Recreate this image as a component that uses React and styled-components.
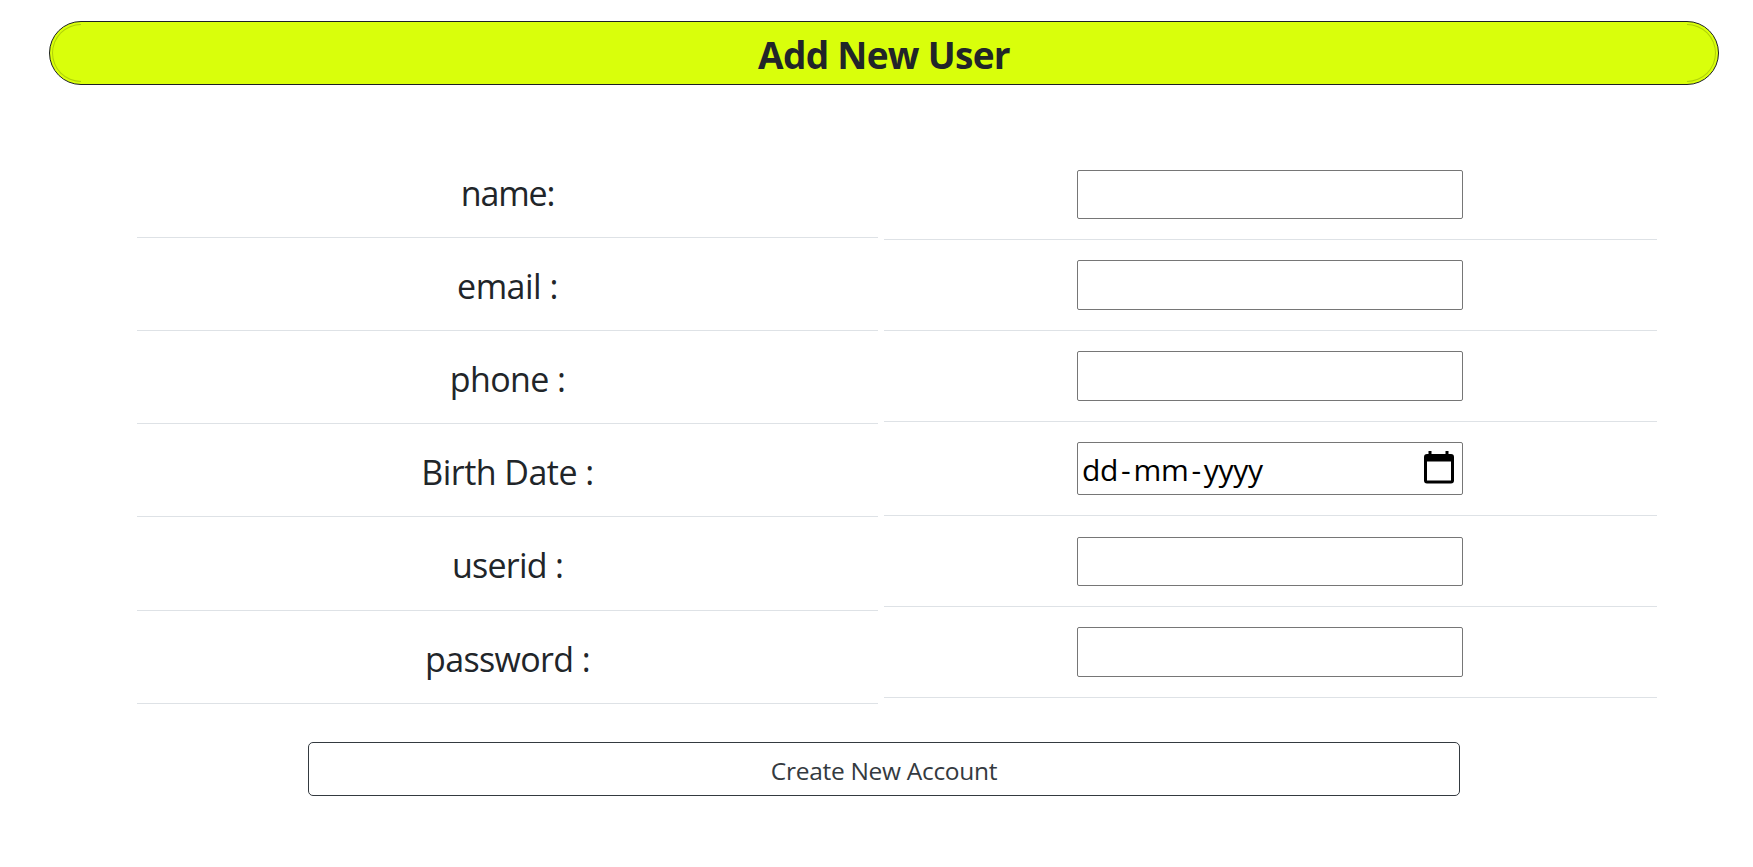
import React from "react";
import styled, { createGlobalStyle } from "styled-components";

const GlobalStyle = createGlobalStyle`
  *, *::before, *::after { box-sizing: border-box; }
  body {
    margin: 0;
    background: #fff;
    color: #212529;
    font-family: "Open Sans", "Noto Sans", sans-serif;
  }
`;

const Page = styled.main`
  display: flex;
  flex-direction: column;
  height: 867px;
  padding-top: 21px;
  overflow: hidden;
`;

const Banner = styled.header`
  position: relative;
  display: flex;
  flex: none;
  align-items: center;
  justify-content: center;
  width: 1670px;
  height: 64px;
  margin-left: 49px;
  padding-top: 3px;
  border: 1px solid #1c2023;
  border-radius: 32px;
  background: #d9ff0b;

  &::before, &::after {
    content: "";
    position: absolute;
    top: 2px;
    bottom: 2px;
    width: 29px;
    border: 1px solid rgba(70, 90, 0, 0.28);
  }
  &::before { left: 2px; border-right: 0; border-radius: 29px 0 0 29px; }
  &::after { right: 2px; border-left: 0; border-radius: 0 29px 29px 0; }
`;

const Title = styled.h1`
  margin: 0;
  font-size: 37px;
  line-height: 50px;
  font-weight: 700;
  white-space: nowrap;
  letter-spacing: ${(p) => p.$spacing}px;
`;

const Form = styled.form`
  display: flex;
  flex: none;
  flex-direction: column;
`;

const Columns = styled.div`
  display: flex;
  align-items: flex-start;
  gap: 6px;
  height: 657px;
  padding: 60px 0 0 137px;
`;

const LabelColumn = styled.div`
  display: flex;
  flex-direction: column;
  width: 741px;
`;

const FieldColumn = styled.div`
  display: flex;
  flex-direction: column;
  width: 773px;
  padding-top: 4px;
`;

const LabelCell = styled.label`
  display: flex;
  justify-content: center;
  height: ${(p) => p.$height}px;
  padding-top: 24px;
  border-bottom: 1px solid #dee2e6;
  font-size: 34px;
  line-height: 48px;
  white-space: pre;
  letter-spacing: ${(p) => p.$spacing}px;
`;

const FieldCell = styled.div`
  display: flex;
  align-items: flex-start;
  height: ${(p) => p.$height}px;
  padding: ${(p) => p.$top}px 0 0 193px;
  border-bottom: 1px solid #dee2e6;
`;

const TextInput = styled.input`
  width: 386px;
  height: ${(p) => p.$height}px;
  margin: 0;
  padding: 1px 2px;
  border: 1px solid #767676;
  border-radius: 2px;
  background: #fff;
  font: inherit;
  font-size: 30px;
`;

const DateInput = styled.div`
  display: flex;
  align-items: flex-start;
  justify-content: space-between;
  width: 386px;
  height: 53px;
  padding: 6px 8px 0 4px;
  border: 1px solid #767676;
  border-radius: 2px;
  background: #fff;
  color: #000;
  font-size: 30px;
  line-height: 42px;
`;

const DateParts = styled.span`
  display: flex;
  letter-spacing: ${(p) => p.$spacing}px;
`;

const Dash = styled.span`
  padding: 0 3px;
`;

const CalendarIcon = styled.svg`
  width: 30px;
  height: 33px;
  margin-top: 2px;
`;

const SubmitButton = styled.button`
  width: 1152px;
  height: 54px;
  margin: 0 0 0 308px;
  padding: 4px 0 0;
  border: 1px solid #343a40;
  border-radius: 5px;
  background: #fff;
  color: #343a40;
  font-family: inherit;
  font-size: 24.5px;
  line-height: 34px;
  letter-spacing: ${(p) => p.$spacing}px;
`;

const labels = [
  { id: "name", text: "name:", height: 93, spacing: -1.1 },
  { id: "email", text: "email :", height: 93, spacing: -0.5 },
  { id: "phone", text: "phone :", height: 93, spacing: -0.6 },
  { id: "birth", text: "Birth Date :", height: 93, spacing: -0.53 },
  { id: "userid", text: "userid :", height: 94, spacing: -0.75 },
  { id: "password", text: "password :", height: 93, spacing: -0.65 },
];

const fields = [
  { id: "name", type: "text", cell: 91, top: 21, height: 49 },
  { id: "email", type: "text", cell: 91, top: 20, height: 50 },
  { id: "phone", type: "text", cell: 91, top: 20, height: 50 },
  { id: "birth", type: "date", cell: 94, top: 20 },
  { id: "userid", type: "text", cell: 91, top: 21, height: 49 },
  { id: "password", type: "password", cell: 91, top: 20, height: 50 },
];

function DateField({ id }) {
  return (
    <DateInput id={id} tabIndex={0}>
      <DateParts $spacing={-0.3}>
        <span>dd</span>
        <Dash>-</Dash>
        <span>mm</span>
        <Dash>-</Dash>
        <span>yyyy</span>
      </DateParts>
      <CalendarIcon viewBox="0 0 30 33" aria-hidden="true">
        <path
          fillRule="evenodd"
          d="M4.5 0h3v3h14V0h3v3H27a3 3 0 0 1 3 3v23.5a3 3 0 0 1-3 3H3a3 3 0 0 1-3-3V6a3 3 0 0 1 3-3h1.5zM3 10.5v19h24v-19z"
        />
      </CalendarIcon>
    </DateInput>
  );
}

export default function App() {
  return (
    <>
      <GlobalStyle />
      <Page>
        <Banner>
          <Title $spacing={-0.7}>Add New User</Title>
        </Banner>
        <Form onSubmit={(e) => e.preventDefault()}>
          <Columns>
            <LabelColumn>
              {labels.map((l) => (
                <LabelCell key={l.id} htmlFor={l.id} $height={l.height} $spacing={l.spacing}>
                  {l.text}
                </LabelCell>
              ))}
            </LabelColumn>
            <FieldColumn>
              {fields.map((f) => (
                <FieldCell key={f.id} $height={f.cell} $top={f.top}>
                  {f.type === "date" ? (
                    <DateField id={f.id} />
                  ) : (
                    <TextInput id={f.id} type={f.type} $height={f.height} />
                  )}
                </FieldCell>
              ))}
            </FieldColumn>
          </Columns>
          <SubmitButton type="submit" $spacing={-0.3}>Create New Account</SubmitButton>
        </Form>
      </Page>
    </>
  );
}
